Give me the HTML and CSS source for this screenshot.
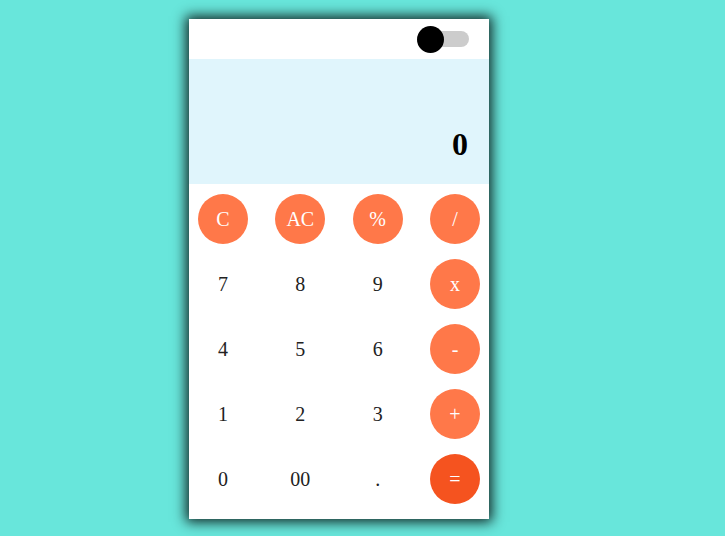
FILE: index.html
```html
<!DOCTYPE html>
<html>
<head>
<meta charset="utf-8">
<link rel="stylesheet" href="styles.css">
</head>
<body>
<div class="calc">
  <div class="topbar">
    <div class="toggle"><span class="knob"></span></div>
  </div>
  <div class="display">0</div>
  <div class="keys">
    <button class="key op">C</button>
    <button class="key op">AC</button>
    <button class="key op">%</button>
    <button class="key op">/</button>
    <button class="key">7</button>
    <button class="key">8</button>
    <button class="key">9</button>
    <button class="key op">x</button>
    <button class="key">4</button>
    <button class="key">5</button>
    <button class="key">6</button>
    <button class="key op">-</button>
    <button class="key">1</button>
    <button class="key">2</button>
    <button class="key">3</button>
    <button class="key op">+</button>
    <button class="key">0</button>
    <button class="key">00</button>
    <button class="key">.</button>
    <button class="key eq">=</button>
  </div>
</div>
</body>
</html>
```
FILE: styles.css
```css
html, body {
  margin: 0;
  height: 100%;
}
body {
  background: #68e6db;
  padding: 19px 0 0 189px;
  box-sizing: border-box;
  font-family: "Liberation Serif", "Times New Roman", serif;
}
.calc {
  width: 300px;
  height: 500px;
  background: #fff;
  box-shadow: 0 0 12px 3px rgba(0, 0, 0, 0.85);
  display: flex;
  flex-direction: column;
}
.topbar {
  height: 40px;
  display: flex;
  justify-content: flex-end;
  align-items: center;
  padding-right: 20px;
}
.toggle {
  width: 51px;
  height: 16px;
  border-radius: 8px;
  background: #cccccc;
  display: flex;
  align-items: center;
}
.knob {
  width: 27px;
  height: 27px;
  border-radius: 50%;
  background: #000;
  margin-left: -1px;
}
.display {
  height: 125px;
  background: #e0f5fc;
  display: flex;
  justify-content: flex-end;
  align-items: flex-end;
  padding: 0 21px 21px 0;
  box-sizing: border-box;
  font-size: 32px;
  font-weight: bold;
  color: #000;
}
.keys {
  flex: 1;
  display: grid;
  grid-template-columns: repeat(4, 50px);
  grid-auto-rows: 50px;
  justify-content: space-between;
  row-gap: 15px;
  padding: 10px 9px 15px;
}
.key {
  width: 50px;
  height: 50px;
  border: none;
  border-radius: 50%;
  background: transparent;
  font-family: "Liberation Serif", "Times New Roman", serif;
  font-size: 20px;
  color: #222;
  padding: 0;
}
.key.op {
  background: #ff7849;
  color: #fff;
}
.key.eq {
  background: #f5531f;
  color: #fff;
}
```
